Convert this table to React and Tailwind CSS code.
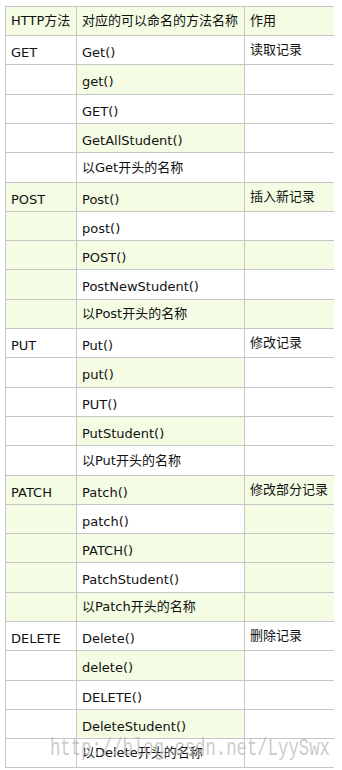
const GREEN = "bg-[#f4fce4]";

// row heights include the bottom border line
const heights = [29, 30, 29, 29, 30, 29, 29, 29, 30, 29, 29, 30, 29, 29, 30, 29, 29, 29, 30, 29, 29, 30, 29, 29, 29];

const groups = [
  { method: "GET", names: ["Get()", "get()", "GET()", "GetAllStudent()", "以Get开头的名称"], use: "读取记录", green: false },
  { method: "POST", names: ["Post()", "post()", "POST()", "PostNewStudent()", "以Post开头的名称"], use: "插入新记录", green: true, col3Zebra: true },
  { method: "PUT", names: ["Put()", "put()", "PUT()", "PutStudent()", "以Put开头的名称"], use: "修改记录", green: false },
  { method: "PATCH", names: ["Patch()", "patch()", "PATCH()", "PatchStudent()", "以Patch开头的名称"], use: "修改部分记录", green: true },
  { method: "DELETE", names: ["Delete()", "delete()", "DELETE()", "DeleteStudent()", "以Delete开头的名称"], use: "删除记录", green: false },
];

const hasCjk = (s) => /[\u4e00-\u9fff]/.test(s);

function Cell({ text, green, last, latinShift }) {
  return (
    <div
      className={`flex items-center pl-[5px] border-b border-[#c6c6c6] whitespace-nowrap ${
        last ? "" : "border-r"
      } ${green ? GREEN : "bg-white"} ${latinShift && text && !hasCjk(text) ? "pt-[5px]" : ""}`}
    >
      {text}
    </div>
  );
}

export default function App() {
  const rows = [];
  groups.forEach((g, gi) => {
    g.names.forEach((name, i) => {
      const zebra = i % 2 === 0 ? g.green : !g.green;
      let c3 = false;
      if (g.green) c3 = g.col3Zebra ? i % 2 === 0 : true;
      rows.push({
        key: `${gi}-${i}`,
        c1: i === 0 ? g.method : "",
        c2: name,
        c3: i === 0 ? g.use : "",
        g1: g.green,
        g2: zebra,
        g3: c3,
      });
    });
  });

  return (
    <div className="relative w-[342px] h-[770px] bg-white overflow-hidden">
      <div
        className="ml-[5px] mt-[6px] w-[329px] border-l border-t border-[#c6c6c6] text-[13px] text-[#111] grid grid-cols-[71px_168px_89px]"
        style={{
          fontFamily: '"DejaVu Sans", Verdana, "Noto Sans CJK SC", sans-serif',
          gridTemplateRows: `29px ${heights.map((h) => `${h}px`).join(" ")}`,
        }}
      >
        <Cell text="HTTP方法" green />
        <Cell text="对应的可以命名的方法名称" green />
        <Cell text="作用" green last />
        {rows.map((r) => [
          <Cell key={r.key + "a"} text={r.c1} green={r.g1} latinShift />,
          <Cell key={r.key + "b"} text={r.c2} green={r.g2} latinShift />,
          <Cell key={r.key + "c"} text={r.c3} green={r.g3} last />,
        ])}
      </div>

      {/* blog watermark */}
      <div
        className="absolute left-[50px] top-[738px] text-[23px] leading-[23px] text-[rgba(185,185,185,0.75)] whitespace-nowrap origin-left scale-x-[0.751]"
        style={{ fontFamily: '"Liberation Mono", "Courier New", monospace' }}
      >
        http://blog.csdn.net/LyySwx
      </div>
    </div>
  );
}
